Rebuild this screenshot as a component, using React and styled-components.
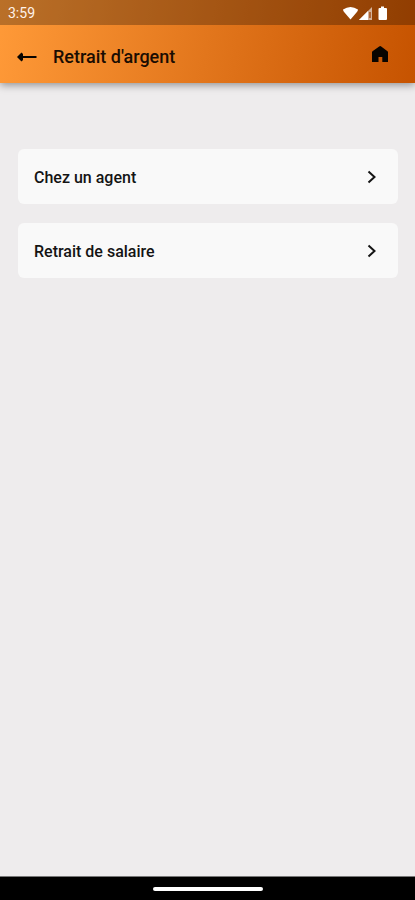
import React from 'react';
import styled, { createGlobalStyle } from 'styled-components';

const GlobalStyle = createGlobalStyle`
  * {
    box-sizing: border-box;
  }

  body {
    margin: 0;
    background-color: #eeeced;
    font-family: Roboto, sans-serif;
    color: #141414;
  }
`;

const Screen = styled.div`
  display: flex;
  flex-direction: column;
  min-height: 100vh;
`;

const TopArea = styled.div`
  background: linear-gradient(100deg, #ff9a38 0%, #e2761c 50%, #c65300 100%);
  box-shadow: 0 2px 8px rgba(0, 0, 0, 0.4);
`;

const StatusBar = styled.div`
  display: flex;
  justify-content: space-between;
  align-items: center;
  height: 25px;
  padding: 0 26px 0 8px;
  background-color: rgba(0, 0, 0, 0.27);
  color: #fff3ea;
`;

const Clock = styled.time`
  font-size: 14px;
  line-height: 24px;
`;

const StatusIcons = styled.svg`
  display: block;
  width: 47px;
  height: 16px;
`;

const Header = styled.header`
  display: flex;
  align-items: center;
  height: 58px;
  padding: 5px 25px 0 16px;
`;

const IconButton = styled.button`
  display: flex;
  padding: 0;
  border: none;
  background: transparent;
  color: #080400;
  cursor: pointer;
`;

const HomeButton = styled(IconButton)`
  margin-left: auto;
  padding-bottom: 5px;
`;

const Title = styled.h1`
  margin: 0 0 0 16px;
  font-size: 18px;
  font-weight: 500;
  line-height: 24px;
  color: #1a0d02;
`;

const Options = styled.main`
  flex: 1;
  display: flex;
  flex-direction: column;
  gap: 19px;
  padding: 66px 17px 24px 18px;
`;

const Option = styled.button`
  display: flex;
  justify-content: space-between;
  align-items: center;
  height: 55px;
  padding: 3px 20px 0 16px;
  border: none;
  border-radius: 6px;
  background-color: #f9f9f9;
  color: inherit;
  font-family: inherit;
  font-size: 16px;
  font-weight: 500;
  line-height: 20px;
  text-align: left;
  cursor: pointer;
`;

const Chevron = styled.svg`
  display: block;
  width: 12px;
  height: 16px;
`;

const NavigationBar = styled.div`
  display: flex;
  justify-content: center;
  align-items: center;
  height: 24px;
  border-top: 1px solid #777;
  background-color: #000;
`;

const NavigationHandle = styled.div`
  width: 110px;
  height: 4px;
  border-radius: 2px;
  background-color: #fff;
`;

const options = ['Chez un agent', 'Retrait de salaire'];

const App = () => {
  return (
    <Screen>
      <GlobalStyle />
      <TopArea>
        <StatusBar>
          <Clock>3:59</Clock>
          <StatusIcons viewBox="0 0 47 16" aria-hidden="true">
            <path d="M1 4.500Q8.500-.5 16 4.500Q16 6 14.500 7.500L8.500 14.500L2.500 7.500Q1 6 1 4.500Z" fill="#fff" />
            <path d="M17 15L30 2V15Z" fill="#fff" opacity=".6" />
            <path d="M17 15L26 6V15Z" fill="#fff" />
            <path d="M28 7V13" stroke="#a34d16" strokeWidth="1.500" />
            <path d="M39 1.500H42V3H44Q45 3 45 4V14Q45 15 44 15H37.500Q36.500 15 36.500 14V4Q36.500 3 37.500 3H39Z" fill="#fff" />
          </StatusIcons>
        </StatusBar>
        <Header>
          <IconButton type="button" aria-label="Retour">
            <svg width="21" height="12" viewBox="0 0 21 12" aria-hidden="true">
              <path d="M3 6H20.500" stroke="currentColor" strokeWidth="2" />
              <path d="M1 6L5.500 1.500L7 3V9L5.500 10.500Z" fill="currentColor" />
            </svg>
          </IconButton>
          <Title>Retrait d'argent</Title>
          <HomeButton type="button" aria-label="Accueil">
            <svg width="20" height="20" viewBox="0 0 20 20" aria-hidden="true">
              <path
                d="M2 18V8.200Q2 7.600 2.500 7.200L9.200 2.400Q10.200 1.700 11.200 2.400L17.500 7.200Q18 7.600 18 8.200V18H12.300V13H8.500V18Z"
                fill="currentColor"
              />
            </svg>
          </HomeButton>
        </Header>
      </TopArea>
      <Options>
        {options.map((label) => (
          <Option key={label} type="button">
            {label}
            <Chevron viewBox="0 0 12 16" aria-hidden="true">
              <path d="M2.500 1.500L8.500 7L2.500 12.500" fill="none" stroke="currentColor" strokeWidth="2" />
            </Chevron>
          </Option>
        ))}
      </Options>
      <NavigationBar>
        <NavigationHandle />
      </NavigationBar>
    </Screen>
  );
};

export default App;
